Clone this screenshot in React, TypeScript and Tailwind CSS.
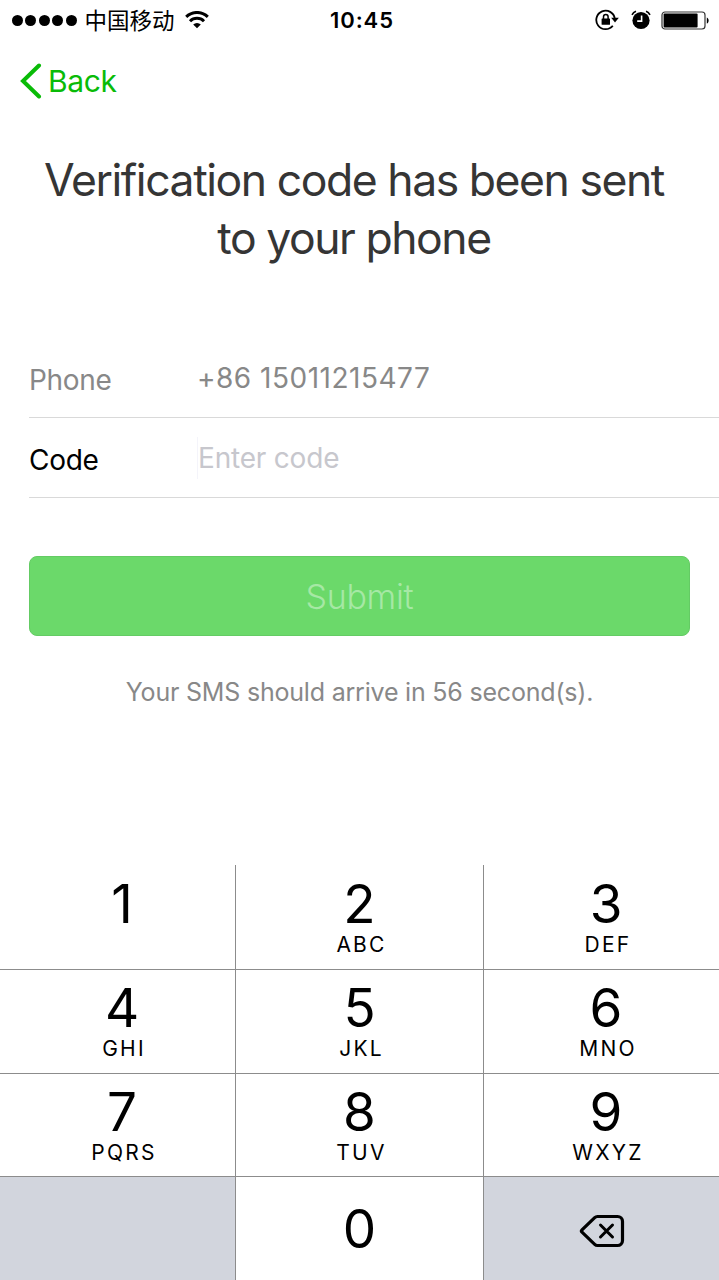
import clsx from 'clsx';

interface KeyProps {
  digit: string;
  letters?: string;
  className?: string;
}

const keys = [
  { digit: '1' },
  { digit: '2', letters: 'ABC' },
  { digit: '3', letters: 'DEF' },
  { digit: '4', letters: 'GHI' },
  { digit: '5', letters: 'JKL' },
  { digit: '6', letters: 'MNO' },
  { digit: '7', letters: 'PQRS' },
  { digit: '8', letters: 'TUV' },
  { digit: '9', letters: 'WXYZ' },
];

// Outer columns sit slightly right of their cell centre
const columnClasses = [
  'border-r pl-[9px]',
  'border-r',
  'pl-[9px]',
];

function SignalDots() {
  return (
    <div className="flex gap-[2.4px]">
      {[0, 1, 2, 3, 4].map((i) => (
        <span key={i} className="h-[11px] w-[11px] rounded-full bg-black" />
      ))}
    </div>
  );
}

function WifiIcon() {
  return (
    <svg className="ml-[10px] h-[18px] w-6" viewBox="0 0 24 18" fill="none">
      <path d="M1.2 5.8a15.6 15.6 0 0 1 21.6 0" stroke="black" strokeWidth="3" />
      <path d="M5 10.2a10 10 0 0 1 14 0" stroke="black" strokeWidth="3" />
      <path d="M12 17.2 8.2 13.6a5.3 5.3 0 0 1 7.6 0Z" fill="black" />
    </svg>
  );
}

function RotationLockIcon() {
  return (
    <svg className="h-[22px] w-6" viewBox="0 0 24 22" fill="none">
      <path d="M17.8 16.8A9.3 9.3 0 1 1 19.8 9.6" stroke="black" strokeWidth="1.8" />
      <path d="M16.2 8.8h7.6L20 13.4Z" fill="black" />
      <rect x="6.6" y="9.4" width="8.4" height="6.4" rx="0.6" fill="black" />
      <path d="M8.5 10V7.8a2.3 2.3 0 0 1 4.6 0V10" stroke="black" strokeWidth="1.5" />
    </svg>
  );
}

function AlarmIcon() {
  return (
    <svg className="ml-[12px] h-5 w-5" viewBox="0 0 20 20" fill="none">
      <circle cx="10" cy="10.5" r="8.6" fill="black" />
      <path d="M1 4.8A7 7 0 0 1 5 1.3M19 4.8A7 7 0 0 0 15 1.3" stroke="black" strokeWidth="1.6" />
      <path d="M10.6 5.5v5.6H6.2" stroke="white" strokeWidth="1.6" />
    </svg>
  );
}

function BatteryIcon() {
  return (
    <svg className="ml-[10px] h-[19px] w-[49px]" viewBox="0 0 49 19" fill="none">
      <rect x="1" y="1" width="43" height="17" rx="3" stroke="#333333" strokeWidth="1.2" />
      <rect x="2.6" y="2.6" width="34" height="13.8" rx="1" fill="black" />
      <path d="M45.8 6.4c2.4.8 2.4 5.4 0 6.2Z" fill="black" />
    </svg>
  );
}

function StatusBar() {
  return (
    <div className="grid h-10 grid-cols-[1fr_auto_1fr] items-center pl-3 pr-[9px]">
      <div className="flex items-center">
        <SignalDots />
        <span className="ml-[8px] pb-[2px] font-['Noto_Sans_CJK_SC',sans-serif] text-[22.5px] leading-none">
          中国移动
        </span>
        <WifiIcon />
      </div>
      <span className="pl-[2px] text-[22px] font-semibold tracking-[0.9px]">10:45</span>
      <div className="flex items-center justify-end">
        <RotationLockIcon />
        <AlarmIcon />
        <BatteryIcon />
      </div>
    </div>
  );
}

function Key({ digit, letters, className }: KeyProps) {
  return (
    <button
      type="button"
      className={clsx('flex flex-col items-center border-[#8c8c8c] bg-white', className)}
    >
      <span className="text-[53px] leading-[40px]">{digit}</span>
      {letters && (
        <span className="mt-[9px] pl-[4px] text-[21px] leading-[24px] tracking-[2.2px]">{letters}</span>
      )}
    </button>
  );
}

function Keypad() {
  return (
    <div className="mt-auto grid h-[415px] grid-cols-[236px_248px_235px] grid-rows-[105px_104px_103px_103px]">
      {keys.map((key, i) => (
        <Key
          key={key.digit}
          {...key}
          className={clsx('border-b', i < 3 ? 'pt-[19px]' : 'pt-[18px]', columnClasses[i % 3])}
        />
      ))}
      <div className="border-r border-[#8c8c8c] bg-[#d2d5dd]" />
      <Key digit="0" className="border-r pt-[32px]" />
      <button type="button" aria-label="Delete" className="flex items-center justify-center bg-[#d2d5dd] pt-[4px]">
        <svg className="h-[34px] w-[46px]" viewBox="0 0 46 34" fill="none" stroke="black" strokeLinecap="round" strokeLinejoin="round">
          <path
            d="M18.5 2.5H38.5a5 5 0 0 1 5 5V26.5a5 5 0 0 1-5 5H18.5a4 4 0 0 1-2.8-1.1L3 18.2a1.7 1.7 0 0 1 0-2.4L15.7 3.6a4 4 0 0 1 2.8-1.1Z"
            strokeWidth="3.2"
          />
          <path d="M21.5 11 33.5 23M33.5 11 21.5 23" strokeWidth="3" />
        </svg>
      </button>
    </div>
  );
}

export default function App() {
  return (
    <div className="flex h-[1280px] w-[719px] flex-col overflow-hidden bg-white font-['Inter',sans-serif] text-black">
      <StatusBar />

      {/* Navigation */}
      <button type="button" className="flex h-[82px] items-center self-start pl-5 text-[#09bb07]">
        <svg className="h-9 w-[22px]" viewBox="0 0 22 36" fill="none">
          <path d="M19 2.5 3 18 19 33.5" stroke="currentColor" strokeWidth="4" strokeLinecap="round" />
        </svg>
        <span className="ml-[6px] text-[30px] tracking-[-0.4px]">Back</span>
      </button>

      <h1 className="mt-[29px] pr-[11px] text-center text-[44.5px] leading-[58px] tracking-[-1.45px] text-[#353535]">
        Verification code has been sent
        <br />
        to your phone
      </h1>

      {/* Form */}
      <div className="mt-[71px] pl-[29px] text-[28px]">
        <div className="flex h-20 items-center border-b border-[#d9d9d9]">
          <span className="w-[168px] pt-1 tracking-[-0.3px] text-[#888888]">Phone</span>
          <span className="tracking-[0.5px] text-[#888888]">+86 15011215477</span>
        </div>
        <div className="flex h-20 items-center border-b border-[#d9d9d9]">
          <span className="w-[168px] pt-1 tracking-[-0.3px]">Code</span>
          <span className="border-l border-[#f4f4fa] tracking-[-0.2px] text-[#c7c7cd]">Enter code</span>
        </div>
      </div>

      <button
        type="button"
        className="mx-[29px] mt-[58px] h-20 rounded-lg border border-[#64cb64] bg-[#6bd96a] text-[34px] font-light tracking-[-0.3px] text-[#a6e8a5]"
      >
        Submit
      </button>

      <p className="mt-[38px] text-center text-[25px] leading-9 tracking-[-0.2px] text-[#888888]">
        Your SMS should arrive in 56 second(s).
      </p>

      <Keypad />
    </div>
  );
}
